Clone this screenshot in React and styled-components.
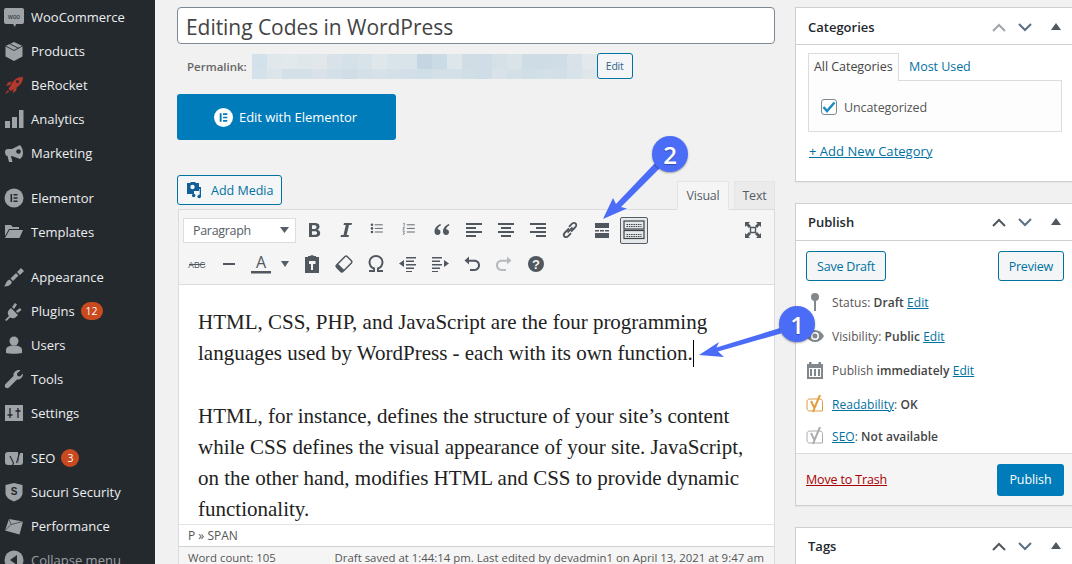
import React from 'react';
import styled, { createGlobalStyle } from 'styled-components';

const Global = createGlobalStyle`
  html, body { margin: 0; padding: 0; height: 100%; overflow: hidden; background: #f1f1f1; }
  * { box-sizing: border-box; }
  body { font-family: "Open Sans", "Noto Sans", sans-serif; font-size: 12.5px; color: #444; }
`;

const Page = styled.div`
  position: relative; width: 1072px; height: 564px; overflow: hidden; display: flex; background: #f1f1f1;
`;

/* ---------- admin menu ---------- */
const Sidebar = styled.nav`
  width: 155px; height: 564px; flex: none; background: #24292e; overflow: hidden;
`;
const MenuItem = styled.div`
  display: flex; align-items: center; height: 34px; padding-left: 4px; color: ${p => p.$dim ? '#9ba0a5' : '#eceeef'};
  margin-top: ${p => p.$sep ? '11px' : '0'}; font-size: 13px; letter-spacing: 0;
`;
const MenuIcon = styled.span`
  width: 20px; height: 20px; margin-right: 7px; display: flex; align-items: center; justify-content: center; flex: none;
`;
const Count = styled.span`
  margin-left: 6px; min-width: 18px; height: 18px; padding: 0 5px; border-radius: 9px; background: #ca4a1f; color: #fff;
  font-size: 10.5px; display: flex; align-items: center; justify-content: center; letter-spacing: 0;
`;

/* ---------- centre column ---------- */
const Center = styled.main`
  width: 598px; margin-left: 22px; flex: none; display: flex; flex-direction: column; padding-top: 7px;
`;
const Title = styled.div`
  height: 37px; background: #fff; border: 1px solid #7e8993; border-radius: 4px; padding-left: 8px;
  font-size: 21px; line-height: 38px; color: #444; letter-spacing: -0.05px;
`;
const PermalinkRow = styled.div`
  display: flex; align-items: center; height: 26px; margin-top: 9px; padding-left: 10px; font-size: 11.5px; font-weight: 600; color: #666;
`;
const Mosaic = styled.div`
  width: 345px; height: 25px; margin-left: 5px; margin-top: 1px; display: grid; grid-template-columns: repeat(23, 15px); grid-template-rows: 15px 10px;
`;
const MosaicCell = styled.i`
  display: block; background: ${p => p.$c};
`;
const SmallBtn = styled.span`
  height: 26px; padding: 0 8px; display: flex; align-items: center; font-size: 10.5px; font-weight: 400; color: #32628a;
  background: #f3f5f6; border: 1px solid #0071a1; border-radius: 3px; letter-spacing: -0.2px;
`;
const ElementorBtn = styled.div`
  width: 219px; height: 46px; margin-top: 15px; padding-right: 2px; border-radius: 3px; background: #007cba; color: #fff; display: flex; align-items: center;
  justify-content: center; gap: 6px; font-size: 13px; letter-spacing: -0.03px;
`;
const EditorHead = styled.div`
  display: flex; align-items: flex-end; justify-content: space-between; height: 34px; margin-top: 35px;
`;
const MediaBtn = styled.div`
  width: 105px; height: 30px; margin-bottom: 4px; border: 1px solid #0071a1; border-radius: 3px; background: #f3f5f6; color: #0071a1;
  display: flex; align-items: center; padding-left: 8px; gap: 7px; font-size: 12.5px; letter-spacing: 0;
`;
const Tabs = styled.div`
  display: flex; gap: 5px; align-items: flex-end;
`;
const EdTab = styled.div`
  height: ${p => p.$on ? '29px' : '28px'}; width: ${p => p.$on ? '52px' : '41px'}; margin-bottom: ${p => p.$on ? '-1px' : '0'};
  display: flex; align-items: center; justify-content: center; font-size: 12.5px; letter-spacing: -0.2px;
  border: 1px solid #e2e4e7; ${p => p.$on ? 'border-bottom-color: #f5f5f5; background: #f5f5f5;' : 'border-bottom: 0; background: #ebebeb;'} color: #555d66; position: relative;
`;
const Editor = styled.section`
  margin-left: 1px; border: 1px solid #dcdcde; border-bottom: 0; background: #fff; flex: 1; display: flex; flex-direction: column; min-height: 0;
`;
const Toolbar = styled.div`
  height: 75px; flex: none; padding: 6px 7px 0 4px; background: #f5f5f5; border-bottom: 1px solid #dcdcde; display: flex; flex-direction: column; gap: 6px;
`;
const ToolRow = styled.div`
  display: flex; align-items: center; gap: 4px; height: 28px;
`;
const Select = styled.div`
  width: 113px; height: 25px; background: #fff; border: 1px solid #ddd; padding: 0 6px 0 9px; display: flex; justify-content: space-between; align-items: center;
  font-size: 12.5px; color: #555d66; letter-spacing: -0.3px;
`;
const Tool = styled.span`
  width: ${p => p.$w || 28}px; height: 28px; flex: none; display: flex; align-items: center; justify-content: center;
  margin-left: ${p => p.$ml || '0'}; color: #50575e;
  ${p => p.$active && 'border: 1px solid #555d66; border-radius: 2px; background: #e6e7e8; height: 27px;'}
`;
const Content = styled.article`
  height: 239px; flex: none; padding: 22px 19px 0; overflow: hidden; font-family: "Liberation Serif", serif; font-size: 21px; line-height: 31px; color: #222;
`;
const Para = styled.p`
  margin: 0 0 32px;
`;
const Caret = styled.span`
  display: inline-block; width: 1px; height: 27px; background: #000; vertical-align: -7px;
`;
const PathBar = styled.div`
  height: 22px; flex: none; padding-left: 9px; display: flex; align-items: center; font-size: 12px; color: #555; background: #fff; border-top: 1px solid #e2e4e7;
`;
const StatusBar = styled.div`
  flex: 1; display: flex; justify-content: space-between; padding: 3px 10px 0 9px; font-size: 11.4px; color: #555; background: #f5f5f5; border-top: 1px solid #d0d0d0;
`;

/* ---------- side column ---------- */
const Side = styled.aside`
  width: 280px; margin-left: 20px; flex: none; padding-top: 7px; display: flex; flex-direction: column; gap: 21px;
`;
const Box = styled.section`
  border: 1px solid #ccd0d4; background: #fff; box-shadow: 0 1px 1px rgba(0,0,0,.04); height: ${p => p.$h}px; flex: none; display: flex; flex-direction: column;
`;
const BoxHead = styled.header`
  height: ${p => p.$flat ? 36 : 37}px; flex: none; padding: ${p => p.$low ? '2px' : '0'} 12px 0; display: flex; align-items: center; justify-content: space-between; border-bottom: ${p => p.$flat ? '0' : '1px solid #ccd0d4'};
  font-size: 13px; font-weight: 600; color: #23282d; letter-spacing: 0;
`;
const HeadIcons = styled.div`
  display: flex; align-items: center; gap: 12px; margin-right: 1px;
`;
const SortTri = styled.svg`
  margin-left: 7px; margin-top: -2px;
`;
const CatBody = styled.div`
  padding: 8px 12px 0;
`;
const CatTabs = styled.div`
  display: flex; height: 28px; font-size: 12.5px; letter-spacing: -0.05px;
`;
const CatTab = styled.div`
  padding: 0 ${p => p.$on ? '5px' : '10px'}; width: ${p => p.$on ? '91px' : 'auto'}; height: 27px; display: flex; align-items: center; color: ${p => p.$on ? '#444' : '#0071a1'};
  ${p => p.$on && 'height: 28px; border: 1px solid #dcdcde; border-bottom: 0; background: #fdfdfd; position: relative; z-index: 1; padding-bottom: 3px;'}
`;
const CatPanel = styled.div`
  width: 254px; height: 52px; margin-top: -1px; border: 1px solid #dcdcde; background: #fdfdfd; padding: 18px 12px 0; display: flex; align-items: flex-start; gap: 7px; font-size: 12.5px; color: #555;
  letter-spacing: -0.1px;
`;
const Check = styled.span`
  width: 16px; height: 16px; border: 1px solid #7e8993; border-radius: 3px; background: #fff; display: flex; align-items: center; justify-content: center; flex: none;
`;
const AddLink = styled.a`
  display: block; margin-top: 10px; padding-left: 1px; color: #0071a1; text-decoration: underline; font-size: 13px; letter-spacing: 0.03px;
`;
const PubActions = styled.div`
  display: flex; justify-content: space-between; padding: 10px 10px 0;
`;
const OutlineBtn = styled.span`
  height: 30px; padding: 0 10px; display: flex; align-items: center; border: 1px solid #0071a1; border-radius: 3px; background: #f3f5f6; color: #0071a1;
  font-size: 12.5px; letter-spacing: -0.2px;
`;
const PubList = styled.div`
  padding: 4px 0 0 10px; flex: 1;
`;
const PubRow = styled.div`
  height: ${p => p.$h || 34}px; display: flex; align-items: center; gap: 8px; font-size: 12px; letter-spacing: 0.05px; color: #555;
`;
const PubIcon = styled.span`
  width: 18px; height: 20px; display: flex; align-items: center; justify-content: center; flex: none;
`;
const Strong = styled.b`
  font-weight: 600; color: #444;
`;
const TextLink = styled.a`
  color: #0071a1; text-decoration: underline;
`;
const PubFooter = styled.footer`
  height: 52px; flex: none; background: #f5f5f5; border-top: 1px solid #dcdcde; display: flex; align-items: center; justify-content: space-between; padding: 0 10px;
`;
const TrashLink = styled.a`
  color: #a00; text-decoration: underline; font-size: 12.5px; letter-spacing: -0.15px; margin-bottom: 1px;
`;
const PublishBtn = styled.span`
  width: 67px; height: 32px; display: flex; align-items: center; justify-content: center; border-radius: 3px; background: #007cba; color: #fff; font-size: 12.5px; letter-spacing: -0.1px;
`;

/* ---------- annotations over the page ---------- */
const Overlay = styled.svg`
  position: absolute; left: 0; top: 0; width: 1072px; height: 564px; pointer-events: none;
`;
const Badge = styled.div`
  position: absolute; left: ${p => p.$x - 18}px; top: ${p => p.$y - 18}px; width: 36px; height: 36px; border-radius: 50%; background: #4a6cf7;
  color: #fff; font-size: 24px; font-weight: 600; display: flex; align-items: center; justify-content: center; box-shadow: 0 1px 2px rgba(0,0,0,.35);
  text-shadow: 0 1px 1px rgba(0,0,0,.3);
`;

/* ---------- icon drawings ---------- */
const G = '#9ea3a8';
const Svg = ({ children, s = 20, vb = '0 0 20 20', ...r }) => <svg width={s} height={s} viewBox={vb} {...r}>{children}</svg>;

const menuIcons = {
  woo: <Svg><rect x="0" y="0" width="20" height="16" rx="2" fill={G} transform="translate(0 1)"/><path d="M9 17l2 3 1-3z" fill={G}/><text x="10" y="11.5" fontSize="6.5" textAnchor="middle" fill="#24292e" fontFamily="Liberation Sans">woo</text></Svg>,
  box: <Svg><path d="M10 1l8.500 4v10.500L10 20l-8.500-4.500V5z" fill={G}/><path d="M1.500 5L10 9.500 18.500 5M6 3l8.500 4.200" fill="none" stroke="#24292e" strokeWidth=".9"/></Svg>,
  rocket: <Svg><path d="M19 2c-4-.4-7.500 1.500-10 4.500L4.500 14l2 2 7.500-4.500C17 9 19.200 6 19 2z" fill="#b3392e"/><path d="M8 6.500L4 7.500 2 11l4-1zM13 12l-1 4-3.500 2 1-4zM4 15l-3 4 4-2z" fill="#b3392e"/><circle cx="13.500" cy="6.500" r="1.500" fill="#24292e"/></Svg>,
  chart: <Svg><path d="M1 12h5v7H1zM8 8h5v11H8zM15 1h4.500v18H15z" fill={G}/></Svg>,
  horn: <Svg><path d="M1 9c0-2 1-3 3-3h4l8-4c2 2 3 5 3 8s-1 4.500-3 6l-8-3H7l1.500 6H5L3.500 13C2 13 1 11 1 9z" fill={G}/><circle cx="14.500" cy="8.500" r="2.300" fill="#24292e"/></Svg>,
  elementor: <Svg><circle cx="10" cy="10" r="9.500" fill={G}/><path d="M6.500 6h1.600v8H6.500zM9.500 6h4v1.500h-4zM9.500 9.200h4v1.500h-4zM9.500 12.500h4V14h-4z" fill="#24292e"/></Svg>,
  folder: <Svg><path d="M1 3h6l1.500 2H15v2H5L1 14z" fill={G}/><path d="M5.500 8H19l-3.500 8H1z" fill={G}/></Svg>,
  brush: <Svg><path d="M12 6l2.500 2.500L9 14l-2.500-2.500zM13 5l4-4 3 3-4 4z" fill={G}/><path d="M5.500 12.500l2.500 2.500c-1 3-4 4.500-8 4.500 2-1.500 1.500-5.500 5.500-7z" fill={G}/></Svg>,
  plug: <Svg><path d="M1 19l4-4c-2-3-1-5 0-6l2-2 7 7-2 2c-1 1-3 2-6 .5l-3.500 3.500zM8 6l3-4 2 1.500L10 8zM12 10l4-3 1.500 2-4 3z" fill={G}/></Svg>,
  user: <Svg><circle cx="10" cy="6" r="4.500" fill={G}/><path d="M2 18v-3c0-3 3-4.500 8-4.500s8 1.500 8 4.500v3c-3 1-13 1-16 0z" fill={G}/></Svg>,
  wrench: <Svg><path d="M19 5c0 3-2.500 6-6 5.500L5 18.500c-1 1-2.500 1-3.500 0s-1-2.500 0-3.500l8-8C9 3.500 12 1 15 1c.5 0 1 0 1.500.3L13 4.500l.5 2.500 2.500.5 3-3c0 .2 0 .3 0 .5z" fill={G}/></Svg>,
  sliders: <Svg><rect x="1" y="2" width="18" height="16" fill={G}/><path d="M6 5v10M14 5v10" stroke="#24292e" strokeWidth="1.300"/><path d="M3.500 12h5M11.500 8h5" stroke="#24292e" strokeWidth="1.500"/></Svg>,
  yoast: <Svg><path d="M4 4h10v13H4c-2 0-3-1-3-3V7c0-2 1-3 3-3z" fill={G}/><path d="M15 5h4v9c0 2-1 3-3 3h-2z" fill={G}/><path d="M6 8l3.500 7c-.5 2-1.500 3.500-3 4.500M17 0l-4.500 15" fill="none" stroke="#24292e" strokeWidth="1.100"/></Svg>,
  shield: <Svg><path d="M10 1l8.500 2v8c0 4-4 7-8.500 8.500C5.500 18 1.500 15 1.500 11V3z" fill={G}/><text x="10" y="13" fontSize="10" fontWeight="700" textAnchor="middle" fill="#24292e" fontFamily="Liberation Sans">S</text></Svg>,
  perf: <Svg><path d="M5 3l14 2.500-3.500 13L1 14.500z" fill={G}/><path d="M5 3L7 8.500l12-3M7 8.500L1 14.500" fill="none" stroke="#24292e" strokeWidth=".6"/></Svg>,
  collapse: <Svg><circle cx="10" cy="10" r="9.500" fill="#9ba0a5"/><path d="M13 5v10L6 10z" fill="#24292e"/></Svg>,
};

const I = '#50575e';
const tools = {
  b: <Svg><path fillRule="evenodd" d="M5 3h6c3 0 4.500 1.300 4.500 3.500 0 1.500-.8 2.700-2.200 3.200 1.900.4 2.900 1.700 2.900 3.500 0 2.500-1.800 3.800-4.700 3.800H5zm3 2.300V9h2.500c1.300 0 2-.7 2-1.900 0-1.200-.7-1.800-2-1.800zm0 5.900v3.500h2.800c1.400 0 2.300-.6 2.300-1.800 0-1.200-.9-1.700-2.300-1.700z" fill={I}/></Svg>,
  i: <Svg><path d="M8 3h8l-.5 2h-2.500l-2.300 10H13l-.5 2h-8l.5-2h2.500L9.800 5H7.500z" fill={I}/></Svg>,
  ul: <Svg s={16}><path d="M6 3.500h10M6 8h10M6 12.500h10" stroke={I} strokeWidth="1.100"/><circle cx="2.500" cy="3.500" r="1.600" fill={I}/><circle cx="2.500" cy="8" r="1.600" fill={I}/><circle cx="2.500" cy="12.500" r="1.600" fill={I}/></Svg>,
  ol: <Svg s={16}><path d="M6 3.500h10M6 8h10M6 12.500h10" stroke={I} strokeWidth="1.100"/><path d="M1.500 2l1.200-.6v4.400M1 7h2l-2 3h2.200M1 12h2l-1 1.500h.5l.5 1.500-2 .8" fill="none" stroke={I} strokeWidth=".8"/></Svg>,
  quote: <Svg><path d="M8.500 4C5 5.500 2.500 8 2.500 11.500c0 2 1.200 3.500 3 3.500s3-1.300 3-3-1.200-2.800-3-2.800c.3-1.500 1.500-3 3.500-4zM17 4c-3.500 1.500-6 4-6 7.500 0 2 1.200 3.500 3 3.500s3-1.300 3-3-1.200-2.800-3-2.800c.3-1.500 1.500-3 3.500-4z" fill={I}/></Svg>,
  al: <Svg><path d="M2 3h16v2H2zM2 7h10v2H2zM2 11h16v2H2zM2 15h10v2H2z" fill={I}/></Svg>,
  ac: <Svg><path d="M2 3h16v2H2zM5 7h10v2H5zM2 11h16v2H2zM5 15h10v2H5z" fill={I}/></Svg>,
  ar: <Svg><path d="M2 3h16v2H2zM8 7h10v2H8zM2 11h16v2H2zM8 15h10v2H8z" fill={I}/></Svg>,
  link: <Svg><g fill="none" stroke={I} strokeWidth="1.800"><path d="M9 8.500L5 12.500c-1.600 1.600-1.600 3 -.6 4s2.500 1 3.800-.4l2.800-3"/><path d="M11 11.500l4-4c1.600-1.600 1.600-3 .6-4s-2.500-1-3.800.4l-2.800 3"/><path d="M7.500 12.500l5-5"/></g></Svg>,
  more: <Svg><path d="M3 3h14v5H3zM3 13h14v5H3zM3 10h4v1.500H3zM8 10h4v1.500H8zM13 10h4v1.500h-4z" fill={I} /></Svg>,
  kitchen: <Svg s={22} vb="0 0 22 22"><g fill="none" stroke="#3c434a"><rect x="1" y="2" width="20" height="8" strokeWidth="1.200"/><rect x="1" y="11.500" width="20" height="8" strokeWidth="1.200"/></g><path d="M3.500 5.500h15M3.500 15.500h15M3.500 17.500h15" stroke="#3c434a" strokeWidth="1.200" strokeDasharray="1.500 .8"/><path d="M3.500 7.500h15" stroke="#3c434a" strokeWidth="1" strokeDasharray="1.500 .8"/></Svg>,
  full: <Svg><path d="M2 2h5L5.500 3.500 8 6 6 8 3.500 5.500 2 7zM18 2v5l-1.500-1.500L14 8l-2-2 2.500-2.500L13 2zM2 18v-5l1.500 1.500L6 12l2 2-2.500 2.500L7 18zM18 18h-5l1.500-1.500L12 14l2-2 2.500 2.500L18 13z" fill={I}/><path d="M7.500 7.500h5v5h-5z" fill="none" stroke={I} strokeWidth="1.400" /></Svg>,
  hr: <Svg><rect x="4" y="9" width="12" height="2" fill={I}/></Svg>,
  paste: <Svg><path fillRule="evenodd" d="M3 3h3V2h2c.4-1 3.600-1 4 0h2v1h3v16H3zm4 4v3h2v6h2v-6h2.500V7H7z" fill={I}/></Svg>,
  eraser: <Svg><g transform="rotate(45 10 10)"><rect x="5.500" y="2.500" width="9" height="15" rx="1.500" fill="none" stroke={I} strokeWidth="1.500"/><rect x="5.500" y="14" width="9" height="3.500" fill={I}/></g></Svg>,
  outdent: <Svg><path d="M8 3h10v1.500H8zM8 6.500h8V8H8zM8 10h10v1.500H8zM8 13.500h8V15H8zM8 17h6v1H8zM1 9.500L6 6v7z" fill={I}/></Svg>,
  indent: <Svg><path d="M2 3h10v1.500H2zM2 6.500h8V8H2zM2 10h10v1.500H2zM2 13.500h8V15H2zM2 17h6v1H2zM19 9.500L14 6v7z" fill={I}/></Svg>,
  undo: <Svg><path d="M7 2.500L2.500 6.500 7 10.500V7.800h5.500c2 0 3.500 1.500 3.500 3.500s-1.500 3.700-3.500 3.700H8V17h4.500c3.200 0 5.500-2.500 5.500-5.700S15.700 5.800 12.500 5.800H7z" fill={I}/></Svg>,
  redo: <Svg><path d="M13 2.500l4.500 4-4.500 4V7.800H7.500C5.500 7.800 4 9.300 4 11.300S5.500 15 7.500 15H12v2H7.500C4.300 17 2 14.500 2 11.300s2.300-5.500 5.500-5.500H13z" fill="#b4b9be"/></Svg>,
  help: <Svg><circle cx="10" cy="10" r="8" fill={I}/><text x="10" y="14.500" fontSize="13" fontWeight="700" textAnchor="middle" fill="#f5f5f5" fontFamily="Liberation Sans">?</text></Svg>,
};
const Tri = ({ c = '#555d66', w = 12, h = 8 }) => <svg width={w} height={h} viewBox="0 0 12 8" preserveAspectRatio="none"><path d="M0 0h12L6 8z" fill={c}/></svg>;
const Abc = () => <svg width="22" height="14" viewBox="0 0 22 14"><text x="11" y="11" fontSize="8.500" fontFamily="Liberation Sans" textAnchor="middle" fill={I}>ABC</text><path d="M3 7.500h16" stroke={I}/></svg>;
const TextColor = () => <svg width="22" height="24" viewBox="0 0 22 24"><text x="11" y="16" fontSize="16" fontFamily="Open Sans" textAnchor="middle" fill={I}>A</text><rect x="1" y="19" width="20" height="2.500" fill={I}/></svg>;
const Omega = () => <svg width="20" height="20" viewBox="0 0 20 20"><path d="M3 17h5v-2.500C5.500 13.500 3.500 11 3.500 8c0-3.500 3-6 6.500-6s6.500 2.500 6.500 6c0 3-2 5.500-4.500 6.500V17h5" fill="none" stroke={I} strokeWidth="2"/></svg>;

const Chevron = ({ up, c }) => <svg width="14" height="9" viewBox="0 0 14 9"><path d={up ? 'M1 8l6-6 6 6' : 'M1 1l6 6 6-6'} fill="none" stroke={c} strokeWidth="2"/></svg>;
const Arrows = ({ upColor = '#50575e' }) => (
  <HeadIcons>
    <Chevron up c={upColor} />
    <Chevron c="#5a7185" />
    <SortTri width="10" height="7" viewBox="0 0 10 7"><path d="M0 7l5-7 5 7z" fill="#50575e"/></SortTri>
  </HeadIcons>
);
const PIN = <svg width="10" height="20" viewBox="0 0 10 20"><circle cx="5" cy="5" r="4" fill="#82878c"/><rect x="4" y="8" width="2" height="11" fill="#82878c"/></svg>;
const EYE = <svg width="18" height="14" viewBox="0 0 18 14"><path d="M0 7c2-4 5.500-6 9-6s7 2 9 6c-2 4-5.500 6-9 6S2 11 0 7z" fill="#82878c"/><circle cx="9" cy="7" r="4" fill="#fff"/><circle cx="9" cy="7" r="2.500" fill="#82878c"/></svg>;
const CAL = <svg width="18" height="18" viewBox="0 0 18 18"><path d="M1 3h16v15H1z" fill="#82878c"/><rect x="3" y="1" width="2.500" height="4" fill="#82878c"/><rect x="12.500" y="1" width="2.500" height="4" fill="#82878c"/><path d="M3 7h12v9H3z" fill="#fff"/><path d="M4 8h2v7H4zM8 8h2v7H8zM12 8h2v7h-2z" fill="#82878c"/></svg>;
const YoastMark = ({ c }) => <svg width="18" height="18" viewBox="0 0 18 18"><path d="M4 4h10c1.500 0 2.500 1 2.500 2.500V16H4c-2 0-3-1-3-3V7c0-2 1-3 3-3z" fill="none" stroke={c} strokeWidth="1"/><path d="M5 6l3.500 7-1.500 4M14 0l-5.500 13" fill="none" stroke={c} strokeWidth="2"/></svg>;

const mosaicColors = [
  '#d3e1ea','#e1e8ec','#e2e8eb','#dfe7eb','#e2e7ea','#d8e2e8','#d5e1e8','#d8e3e9','#e0e7ea','#d8e3ea','#d8e3ea','#c5d6e2','#cbdbe5','#dde6ea','#d0dde5','#d0dde6','#d6e1e7','#d9e3e8','#cedce5','#cedce5','#d0dde6','#d8e2e8','#e2e8ec',
  '#d6e2ea','#dbe5ea','#d3e0e8','#d3e0e8','#d8e2e8','#d3e0e8','#d0dde6','#d3e0e8','#d6e1e8','#d3e0e8','#d3dfe8','#d0dee7','#d3e0e8','#d3e0e8','#d0dee6','#d0dde6','#d8e2e8','#d3e0e8','#d0dee6','#d3e0e8','#d3dfe7','#d8e3e9','#dfe6ea',
];

const menu = [
  ['woo', 'WooCommerce'], ['box', 'Products'], ['rocket', 'BeRocket'], ['chart', 'Analytics'], ['horn', 'Marketing'],
  ['elementor', 'Elementor', { sep: true }], ['folder', 'Templates'],
  ['brush', 'Appearance', { sep: true }], ['plug', 'Plugins', { n: 12 }], ['user', 'Users'], ['wrench', 'Tools'], ['sliders', 'Settings'],
  ['yoast', 'SEO', { sep: true, n: 3 }], ['shield', 'Sucuri Security'], ['perf', 'Performance'], ['collapse', 'Collapse menu', { dim: true }],
];

export default function App() {
  return (
    <Page>
      <Global />
      <Sidebar>
        {menu.map(([icon, label, o = {}]) => (
          <MenuItem key={label} $sep={o.sep} $dim={o.dim}>
            <MenuIcon>{menuIcons[icon]}</MenuIcon>
            {label}
            {o.n && <Count>{o.n}</Count>}
          </MenuItem>
        ))}
      </Sidebar>

      <Center>
        <Title>Editing Codes in WordPress</Title>
        <PermalinkRow>
          Permalink:
          <Mosaic>{mosaicColors.map((c, i) => <MosaicCell key={i} $c={c} />)}</Mosaic>
          <SmallBtn>Edit</SmallBtn>
        </PermalinkRow>
        <ElementorBtn>
          <svg width="19" height="19" viewBox="0 0 20 20"><circle cx="10" cy="10" r="10" fill="#fff"/><path d="M6 5.500h2v9H6zM9.500 5.500H14v1.800H9.500zM9.500 9.100H14v1.800H9.500zM9.500 12.700H14v1.800H9.500z" fill="#007cba"/></svg>
          Edit with Elementor
        </ElementorBtn>
        <EditorHead>
          <MediaBtn>
            <svg width="18" height="18" viewBox="0 0 18 18"><path d="M1 2h3l1-1h4l1 1h3v8H8v3H1z" fill="#135e96"/><circle cx="6.500" cy="6" r="2.200" fill="#f3f5f6"/><path d="M15 6v9.500a1.800 1.800 0 1 1-1.300-1.700V8h-3V6zM9.500 14.500a1.800 1.800 0 1 1-3.600 0 1.800 1.800 0 0 1 3.600 0z" fill="#135e96"/></svg>
            Add Media
          </MediaBtn>
          <Tabs>
            <EdTab $on>Visual</EdTab>
            <EdTab>Text</EdTab>
          </Tabs>
        </EditorHead>
        <Editor>
          <Toolbar>
            <ToolRow>
              <Select>Paragraph <Tri w={9} h={6} /></Select>
              <Tool>{tools.b}</Tool><Tool>{tools.i}</Tool><Tool>{tools.ul}</Tool><Tool>{tools.ol}</Tool><Tool>{tools.quote}</Tool>
              <Tool>{tools.al}</Tool><Tool>{tools.ac}</Tool><Tool>{tools.ar}</Tool><Tool>{tools.link}</Tool><Tool>{tools.more}</Tool>
              <Tool $active>{tools.kitchen}</Tool>
              <Tool $ml="auto">{tools.full}</Tool>
            </ToolRow>
            <ToolRow>
              <Tool><Abc /></Tool><Tool>{tools.hr}</Tool><Tool><TextColor /></Tool><Tool $w={18} $ml="-3px"><Tri w={8} h={6} /></Tool>
              <Tool>{tools.paste}</Tool><Tool>{tools.eraser}</Tool><Tool><Omega /></Tool><Tool>{tools.outdent}</Tool><Tool>{tools.indent}</Tool>
              <Tool>{tools.undo}</Tool><Tool>{tools.redo}</Tool><Tool>{tools.help}</Tool>
            </ToolRow>
          </Toolbar>
          <Content>
            <Para>HTML, CSS, PHP, and JavaScript are the four programming languages used by WordPress - each with its own function.<Caret /></Para>
            <Para>HTML, for instance, defines the structure of your site’s content while CSS defines the visual appearance of your site. JavaScript, on the other hand, modifies HTML and CSS to provide dynamic functionality.</Para>
          </Content>
          <PathBar>P » SPAN</PathBar>
          <StatusBar>
            <span>Word count: 105</span>
            <span>Draft saved at 1:44:14 pm. Last edited by devadmin1 on April 13, 2021 at 9:47 am</span>
          </StatusBar>
        </Editor>
      </Center>

      <Side>
        <Box $h={175}>
          <BoxHead $low>Categories<Arrows upColor="#a0a5aa" /></BoxHead>
          <CatBody>
            <CatTabs>
              <CatTab $on>All Categories</CatTab>
              <CatTab>Most Used</CatTab>
            </CatTabs>
            <CatPanel>
              <Check><svg width="14" height="12" viewBox="0 0 14 12"><path d="M1.500 6l3.500 4 7.500-8.500" fill="none" stroke="#1e8cbe" strokeWidth="2.500"/></svg></Check>
              Uncategorized
            </CatPanel>
            <AddLink>+ Add New Category</AddLink>
          </CatBody>
        </Box>
        <Box $h={303}>
          <BoxHead>Publish<Arrows /></BoxHead>
          <PubActions>
            <OutlineBtn>Save Draft</OutlineBtn>
            <OutlineBtn>Preview</OutlineBtn>
          </PubActions>
          <PubList>
            <PubRow><PubIcon>{PIN}</PubIcon><span>Status: <Strong>Draft</Strong> <TextLink>Edit</TextLink></span></PubRow>
            <PubRow><PubIcon>{EYE}</PubIcon><span>Visibility: <Strong>Public</Strong> <TextLink>Edit</TextLink></span></PubRow>
            <PubRow><PubIcon>{CAL}</PubIcon><span>Publish <Strong>immediately</Strong> <TextLink>Edit</TextLink></span></PubRow>
            <PubRow><PubIcon><YoastMark c="#e29d3c" /></PubIcon><span><TextLink>Readability</TextLink>: <Strong>OK</Strong></span></PubRow>
            <PubRow $h={30}><PubIcon><YoastMark c="#a9adb1" /></PubIcon><span><TextLink>SEO</TextLink>: <Strong>Not available</Strong></span></PubRow>
          </PubList>
          <PubFooter>
            <TrashLink>Move to Trash</TrashLink>
            <PublishBtn>Publish</PublishBtn>
          </PubFooter>
        </Box>
        <Box $h={60}>
          <BoxHead $flat>Tags<Arrows /></BoxHead>
        </Box>
      </Side>

      <Overlay viewBox="0 0 1072 564">
        <path d="M699 355L719 342l-2.500 5.500L780 328l1 5.500-63 18 6 5.500z" fill="#4a6cf7"/>
        <path d="M603 219l10-21 3 6 39-41 5 5-39 39 6 1.500z" fill="#4a6cf7"/>
      </Overlay>
      <Badge $x={797} $y={324}>1</Badge>
      <Badge $x={670} $y={154}>2</Badge>
    </Page>
  );
}
